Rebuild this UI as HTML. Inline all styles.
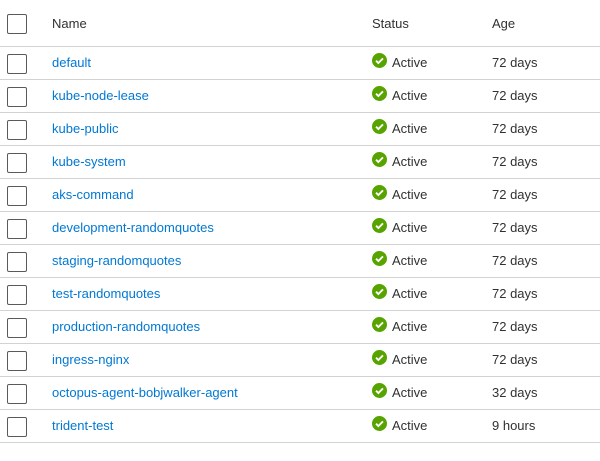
<!DOCTYPE html>
<html><head><style>
body{margin:0;width:600px;height:461px;background:#fff;font-family:"Liberation Sans",sans-serif;font-size:13px;color:#323130;overflow:hidden}
.r{position:absolute;left:0;width:600px;height:34px;border-bottom:1px solid #d2d2d2;box-sizing:border-box}
.cb{position:absolute;left:7px;top:8px;width:20px;height:20px;border:1px solid #5a5a5a;border-radius:2px;box-sizing:border-box}
.n{position:absolute;left:52px;top:9px;color:#0078d4}
.s{position:absolute;left:372px;top:7px}
.a{position:absolute;left:392px;top:9px}
.g{position:absolute;left:492px;top:9px}
.h .cb{top:14px}.h .n,.h .a,.h .g{top:16px;color:#323130}
</style></head><body>
<div class="r h" style="top:0;height:47px"><div class="cb"></div><div class="n">Name</div><div class="a" style="left:372px">Status</div><div class="g">Age</div></div>
<div id="rows"></div>
<script>
var d=[["default","72 days"],["kube-node-lease","72 days"],["kube-public","72 days"],["kube-system","72 days"],["aks-command","72 days"],["development-randomquotes","72 days"],["staging-randomquotes","72 days"],["test-randomquotes","72 days"],["production-randomquotes","72 days"],["ingress-nginx","72 days"],["octopus-agent-bobjwalker-agent","32 days"],["trident-test","9 hours"]];
var h="";d.forEach(function(x,i){h+='<div class="r" style="top:'+(46+i*33)+'px"><div class="cb"></div><div class="n">'+x[0]+'</div><svg class="s" width="15" height="15" viewBox="0 0 16 16"><circle cx="8" cy="8" r="8" fill="#57a300"/><path d="M4.3 8.2l2.5 2.5 4.9-5" stroke="#fff" stroke-width="2" fill="none"/></svg><div class="a">Active</div><div class="g">'+x[1]+'</div></div>'});
document.getElementById("rows").innerHTML=h;
</script>
</body></html>
